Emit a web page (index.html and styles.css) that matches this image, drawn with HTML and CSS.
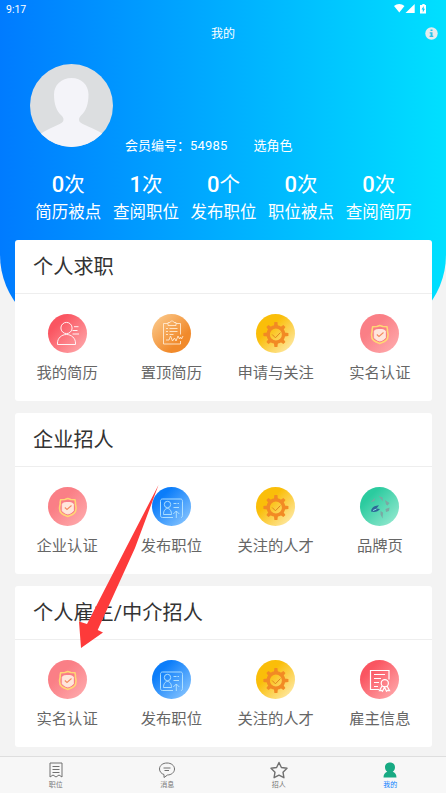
FILE: index.html
```html
<!DOCTYPE html>
<html lang="zh-CN">
<head>
<meta charset="utf-8">
<title>我的</title>
<link rel="stylesheet" href="styles.css">
</head>
<body>
<svg class="defs" width="0" height="0" aria-hidden="true">
  <symbol id="resume" viewBox="0 0 39 39"><g fill="none" stroke="#fff" stroke-opacity=".9"><circle cx="18.500" cy="14" r="5.600"/><path d="M9.500 30.500V29c0-4.700 4-8.500 9-8.500s9 3.800 9 8.500v1.500zM26 12.700h4.500M24.500 16.500h5M24.500 20h6.500"/></g></symbol>
  <symbol id="clipboard" viewBox="0 0 39 39"><g fill="none" stroke="#ffe9cf" stroke-width=".9"><path d="M16 9.500h-4.500v20.500h17v-3M24 9.500h4.500v11M16 8.500h2c0-2 4-2 4 0h2v3h-8z"/><path d="M14 14.500h2m1.500 0h8M14 17.500h2m1.500 0h8M14 20.500h2m1.500 0h4M14 26h3l1.500-4 2 5 2-3 1.500 3 2-5 1.500 3 1-2 1 2 1.500-3"/></g></symbol>
  <symbol id="gear" viewBox="0 0 39 39"><g fill="#f28a24"><path d="M17.900 12l.5-4h3l.5 4zM17.900 29l.5 4h3l.5-4zM11.400 18.500l-4 .5v3l4 .5zM28.400 18.500l4 .5v3l-4 .5z"/><path transform="rotate(45 19.900 20.500)" d="M17.900 12l.5-3.500h3l.5 3.500zM17.900 29l.5 3.500h3l.5-3.500zM11.400 18.500l-3.500.5v3l3.500.5zM28.400 18.500l3.500.5v3l-3.500.5z"/></g><circle cx="19.900" cy="20.500" r="7.700" fill="none" stroke="#f28a24" stroke-width="3.400"/><path d="M16.200 20.500l3.200 3.300 5-5.200" fill="none" stroke="#df851f"/></symbol>
  <symbol id="shield" viewBox="0 0 39 39"><path d="M19.800 11.500l3 1 4.200.3.500 3c-.5 1.500.7 3 .5 5.500.2 5-3.200 6.200-8.200 8.200-5-2-8.400-3.200-8.200-8.200-.2-2.500 1-4 .5-5.500l.5-3 4.200-.3z" fill="#fa7d86" stroke="#ffd775" stroke-width="1.600" stroke-linejoin="round"/><path d="M15 16.300l2.500-.8h4.600l2.500.8.700.7v7l-2.700 2-2.800 1-2.800-1-2.700-2v-7z" fill="#ffe6dc" stroke="#ffe6dc" stroke-linejoin="round"/><path d="M16.800 20.500l2.200 2 4.500-4" fill="none" stroke="#f38b60" stroke-width="1.100"/></symbol>
  <symbol id="publish" viewBox="0 0 39 39"><g fill="none" stroke="#b9e5ff" stroke-width=".9"><path d="M21 30.500H10.500c-1.500 0-2-1-2-2v-14c0-1.500.5-2.500 2-2.500h18c1.500 0 2 1 2 2.500v14c0 1.200-.5 2-1.500 2"/><circle cx="15.500" cy="17.500" r="3.200"/><path d="M11.500 27.500c0-3.500 1.500-6 4-6s4 2.500 4 6zM21.500 16.500h3m1 0h1.500M21.500 20.500h5.500M24.300 31v-7m-3 3l3-3 3 3"/></g></symbol>
  <symbol id="brand" viewBox="0 0 39 39"><path d="M11 24.500c.3-4 3.500-6 8-6.200l-2.500 3.200 3.500.5c-2 2.500-5 3.500-9 2.500z" fill="#2e6797"/><path d="M13 23.500l3.500-1.500" stroke="#8bdfe8" fill="none"/><g fill="#7ba8a3"><path d="M10.500 15l4.500-4-.5 3zM18.500 9l4 1.500.5 4-2.500-3zM25 13l4.500 3-2 2.500-1.500-1zM25.500 22l4-1.500-.5 3.500-3 1zM20.500 24l2.500 1.500-.5 6-2-4z"/></g></symbol>
  <symbol id="certificate" viewBox="0 0 39 39"><g fill="none" stroke="#fff" stroke-width="1.200"><path d="M19 29.500h-8.500v-19H29v9M14 14.500h11M14 18.500h7M14 22.500h5M14 26.500h4"/><circle cx="24.800" cy="23.300" r="3.600"/><path d="M22 26l-2.500 4.500 2-.2 1 1 2-4 2 4 1-1 2 .2-2.500-4.500"/></g></symbol>
</svg>
<div class="app">
  <header class="hero">
    <div class="status">
      <span>9:17</span>
      <svg width="34" height="12" viewBox="0 0 34 12" fill="#fff"><path d="M0 3c3-2.700 7.500-2.700 10.500 0L5.300 9.500zM11.500 10L20.700 1v9zM27 2h1.300V1h2.400v1H32v8.500h-6V2z"/><path d="M29.700 3l-2.200 3.500h1.300V9.500L31 5.800h-1.300z" fill="#03ceff"/></svg>
    </div>
    <div class="topbar">
      <h1>我的</h1>
      <svg class="info" width="13" height="13" viewBox="0 0 13 13"><circle cx="6.500" cy="6.500" r="6.200" fill="#e4ecee"/><path d="M5.500 2.500h2v1.600h-2zM4.700 5.300h2.800v3.500h.8V10H4.600V8.800h1V6.400h-.9z" fill="#27c2e9"/></svg>
    </div>
    <div class="profile">
      <svg class="avatar" width="83" height="83" viewBox="0 0 83 83"><defs><clipPath id="round"><circle cx="41.500" cy="41.500" r="41.500"/></clipPath></defs><g clip-path="url(#round)"><path fill="#dcdee0" d="M0 0h83v83H0z"/><path fill="#f4f4f9" d="M41.500 14c10 0 17 7 17 16.500 0 10-2.500 16.500-7.500 21-2 2-2.500 4-1.500 6 2 3 15 7 23 12V83H11V69.500c7-5 20-9 22-12 1-2 .5-4-1.500-6-5-4.500-7.500-11-7.500-21C24 21 31.500 14 41.500 14z"/></g></svg>
      <span class="member">会员编号：<span class="number">54985</span></span>
      <span class="role">选角色</span>
    </div>
    <div class="stats">
      <div><p><b>0</b>次</p><span>简历被点</span></div>
      <div><p><b>1</b>次</p><span>查阅职位</span></div>
      <div><p><b>0</b>个</p><span>发布职位</span></div>
      <div><p><b>0</b>次</p><span>职位被点</span></div>
      <div><p><b>0</b>次</p><span>查阅简历</span></div>
    </div>
  </header>
  <main class="cards">
    <section class="card">
      <h2>个人求职</h2>
      <div class="grid">
        <div class="item"><svg class="icon red"><use href="#resume"/></svg><span>我的简历</span></div>
        <div class="item"><svg class="icon orange"><use href="#clipboard"/></svg><span>置顶简历</span></div>
        <div class="item"><svg class="icon yellow"><use href="#gear"/></svg><span>申请与关注</span></div>
        <div class="item"><svg class="icon pink"><use href="#shield"/></svg><span>实名认证</span></div>
      </div>
    </section>
    <section class="card">
      <h2>企业招人</h2>
      <div class="grid">
        <div class="item"><svg class="icon pink"><use href="#shield"/></svg><span>企业认证</span></div>
        <div class="item"><svg class="icon blue"><use href="#publish"/></svg><span>发布职位</span></div>
        <div class="item"><svg class="icon yellow"><use href="#gear"/></svg><span>关注的人才</span></div>
        <div class="item"><svg class="icon green"><use href="#brand"/></svg><span>品牌页</span></div>
      </div>
    </section>
    <section class="card">
      <h2>个人雇主/中介招人</h2>
      <div class="grid">
        <div class="item"><svg class="icon pink"><use href="#shield"/></svg><span>实名认证</span></div>
        <div class="item"><svg class="icon blue"><use href="#publish"/></svg><span>发布职位</span></div>
        <div class="item"><svg class="icon yellow"><use href="#gear"/></svg><span>关注的人才</span></div>
        <div class="item"><svg class="icon red"><use href="#certificate"/></svg><span>雇主信息</span></div>
      </div>
    </section>
  </main>
  <nav class="tabs">
    <div class="tab"><svg width="18" height="18" viewBox="0 0 18 18" fill="none" stroke="#707070"><path d="M3 2h12v14l-3-2-3 2-3-2-3 2zM5.500 5.500h7M5.500 8.500h7M5.500 11.500h7"/></svg><span>职位</span></div>
    <div class="tab"><svg width="18" height="18" viewBox="0 0 18 18" fill="none" stroke="#707070"><path d="M6 13.500C3.500 12.800 1.500 10.700 1.500 8c0-3.500 3.300-6 7.500-6s7.500 2.500 7.500 6-3.300 6-7 6L6 16.500zM5.500 7h7M6.500 9.500h4.500"/></svg><span>消息</span></div>
    <div class="tab"><svg width="18" height="18" viewBox="0 0 18 18" fill="none" stroke="#707070" stroke-width="1.400" stroke-linejoin="round"><path d="M9 1.500l2.400 5 5.600.8-4 3.900.9 5.500L9 14.100l-4.900 2.600.9-5.500-4-3.900 5.600-.8z"/></svg><span>招人</span></div>
    <div class="tab active"><svg width="18" height="18" viewBox="0 0 18 18" fill="#18aa83"><path d="M9 1.500c3 0 5 2 5 4.700 0 2-1 3.600-2.300 4.600 2.300.7 3.700 2.400 3.800 5.700h-13c.1-3.300 1.500-5 3.800-5.700C5 9.800 4 8.200 4 6.200 4 3.500 6 1.500 9 1.500z"/></svg><span>我的</span></div>
  </nav>
  <svg class="pointer" width="80" height="164" viewBox="0 0 80 164"><path fill="#fd3a3a" d="M79.500 0L56 63 18.700 145l5.300 2.500L2 163 0 136.500l8 2.500L48 61z"/></svg>
</div>
</body>
</html>
```
FILE: styles.css
```css
* { box-sizing: border-box; }
body, h1, h2, p { margin: 0; }
body {
  background: #f3f3f3;
  font-family: Roboto, "Noto Sans CJK SC", sans-serif;
}
svg { display: block; flex: none; }
.defs { position: absolute; }
.app {
  position: relative;
  display: flex;
  flex-direction: column;
  width: 446px;
  height: 793px;
  overflow: hidden;
}
.hero {
  height: 336px;
  flex: none;
  border-radius: 0 0 81px 81px;
  background: linear-gradient(90deg, #007bff, #00e0ff);
  color: #fff;
}
.status {
  display: flex;
  justify-content: space-between;
  align-items: center;
  height: 18px;
  padding: 0 18px 0 6px;
  font-size: 10.5px;
}
.topbar {
  display: grid;
  grid-template-columns: 30px 1fr 30px;
  align-items: center;
  height: 30px;
}
.status svg { margin-top: -1px; }
.topbar h1 {
  grid-column: 2;
  margin-top: -2px;
  text-align: center;
  font-size: 12px;
  font-weight: 400;
}
.info { justify-self: center; }
.profile {
  display: flex;
  align-items: flex-end;
  margin-top: 16px;
  padding-left: 30px;
  height: 91px;
  font-size: 13px;
  line-height: 18px;
}
.avatar { align-self: flex-start; }
.member { width: 128.5px; margin-left: 12px; white-space: nowrap; }
.number { letter-spacing: .2px; }
.stats {
  display: grid;
  grid-template-columns: repeat(5, 77.6px);
  justify-content: center;
  margin-top: 15px;
  padding-left: 1px;
  text-align: center;
}
.stats p { font-size: 20.5px; line-height: 29px; }
.stats b { font-size: 22px; font-weight: 500; }
.stats span { display: block; font-size: 16.5px; line-height: 26px; white-space: nowrap; }
.cards {
  display: flex;
  flex-direction: column;
  gap: 12px;
  margin: -96px 14px 0 15px;
}
.card {
  height: 161px;
  background: #fff;
  border-radius: 3px;
}
.card h2 {
  height: 54px;
  padding-left: 18px;
  border-bottom: 1px solid #eee;
  color: #333;
  font-size: 20.2px;
  font-weight: 400;
  line-height: 54px;
}
.grid {
  display: grid;
  grid-template-columns: repeat(4, 1fr);
  padding-top: 20px;
}
.item {
  display: flex;
  flex-direction: column;
  align-items: center;
  color: #666;
  font-size: 15.3px;
  line-height: 24px;
  white-space: nowrap;
}
.item span { margin-top: 7.5px; }
.icon { width: 39px; height: 39px; border-radius: 50%; }
.red { background: linear-gradient(135deg, #fa5561 25%, #ffb0b2); }
.orange { background: linear-gradient(135deg, #fac585 10%, #f18a2b 70%); }
.yellow { background: linear-gradient(135deg, #fabe09 35%, #fff0bd); }
.pink { background: linear-gradient(135deg, #fa7f86 35%, #ffafb1); }
.blue { background: linear-gradient(135deg, #0b7dfa 25%, #94ccff); }
.green { background: linear-gradient(135deg, #2bcb9f 25%, #a0ecd5); }
.tabs {
  display: grid;
  grid-template-columns: repeat(4, 1fr);
  margin-top: auto;
  height: 37px;
  border-top: 1px solid #dedede;
  background: #f7f7f7;
}
.tab {
  display: flex;
  flex-direction: column;
  align-items: center;
  padding-top: 4px;
  color: #777;
  font-size: 7px;
  line-height: 12px;
}
.active { color: #087fff; }
.pointer { position: absolute; left: 79px; top: 485px; }
```
